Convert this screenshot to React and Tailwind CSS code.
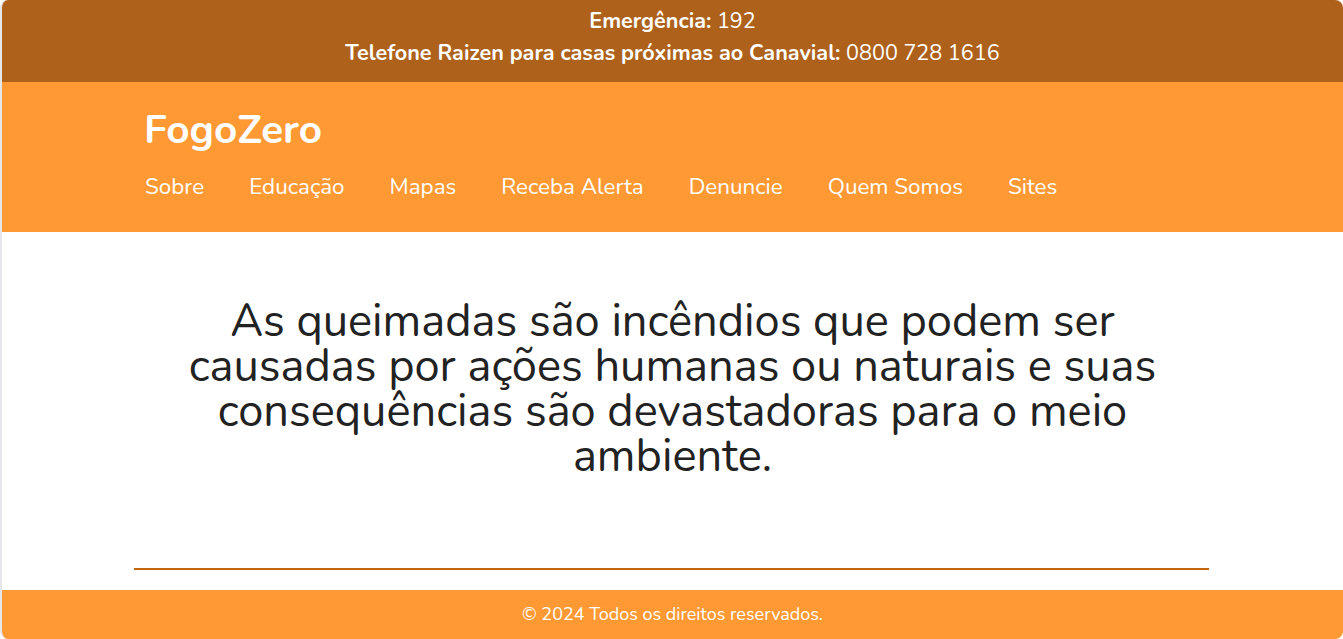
export default function App() {
  const links = ['Sobre', 'Educação', 'Mapas', 'Receba Alerta', 'Denuncie', 'Quem Somos', 'Sites'];

  return (
    <div className="min-h-screen flex flex-col bg-white font-['Nunito','Open_Sans',sans-serif] border-l-2 border-gray-200 rounded-lg overflow-hidden">
      {/* Emergency bar */}
      <div className="bg-[#ad611b] text-white text-center text-[21.6px] h-[82px] pt-[5px] leading-[32px]">
        <p><strong>Emergência:</strong> 192</p>
        <p><strong>Telefone Raizen para casas próximas ao Canavial:</strong> 0800 728 1616</p>
      </div>

      {/* Header */}
      <header className="bg-[#ff9933] h-[150px]">
        <div className="w-[80%] mx-auto px-[9px] pt-[23px]">
          <h1 className="text-white font-bold text-[40.5px] leading-[50px] -ml-px">FogoZero</h1>
          <nav className="flex gap-[45px] mt-[17px]">
            {links.map(l => (
              <a key={l} href="#" className="text-white text-[22.4px] leading-[30px]">{l}</a>
            ))}
          </nav>
        </div>
      </header>

      {/* Hero */}
      <main className="flex-1 flex flex-col">
        <div className="w-[80%] mx-auto flex-1 flex flex-col">
          <h2 className="text-[#222] text-[45.2px] leading-[45px] text-center max-w-[1000px] mx-auto mt-[67px]">
            As queimadas são incêndios que podem ser causadas por ações humanas ou naturais e suas consequências são devastadoras para o meio ambiente.
          </h2>
          <div className="flex-1" />
          <hr className="border-0 border-t-2 border-[#c4660a] mb-[20px] -ml-[2px]" />
        </div>
      </main>

      {/* Footer */}
      <footer className="bg-[#ff9933] h-[49px] flex items-center justify-center">
        <p className="text-white text-[18px]">© 2024 Todos os direitos reservados.</p>
      </footer>
    </div>
  );
}
